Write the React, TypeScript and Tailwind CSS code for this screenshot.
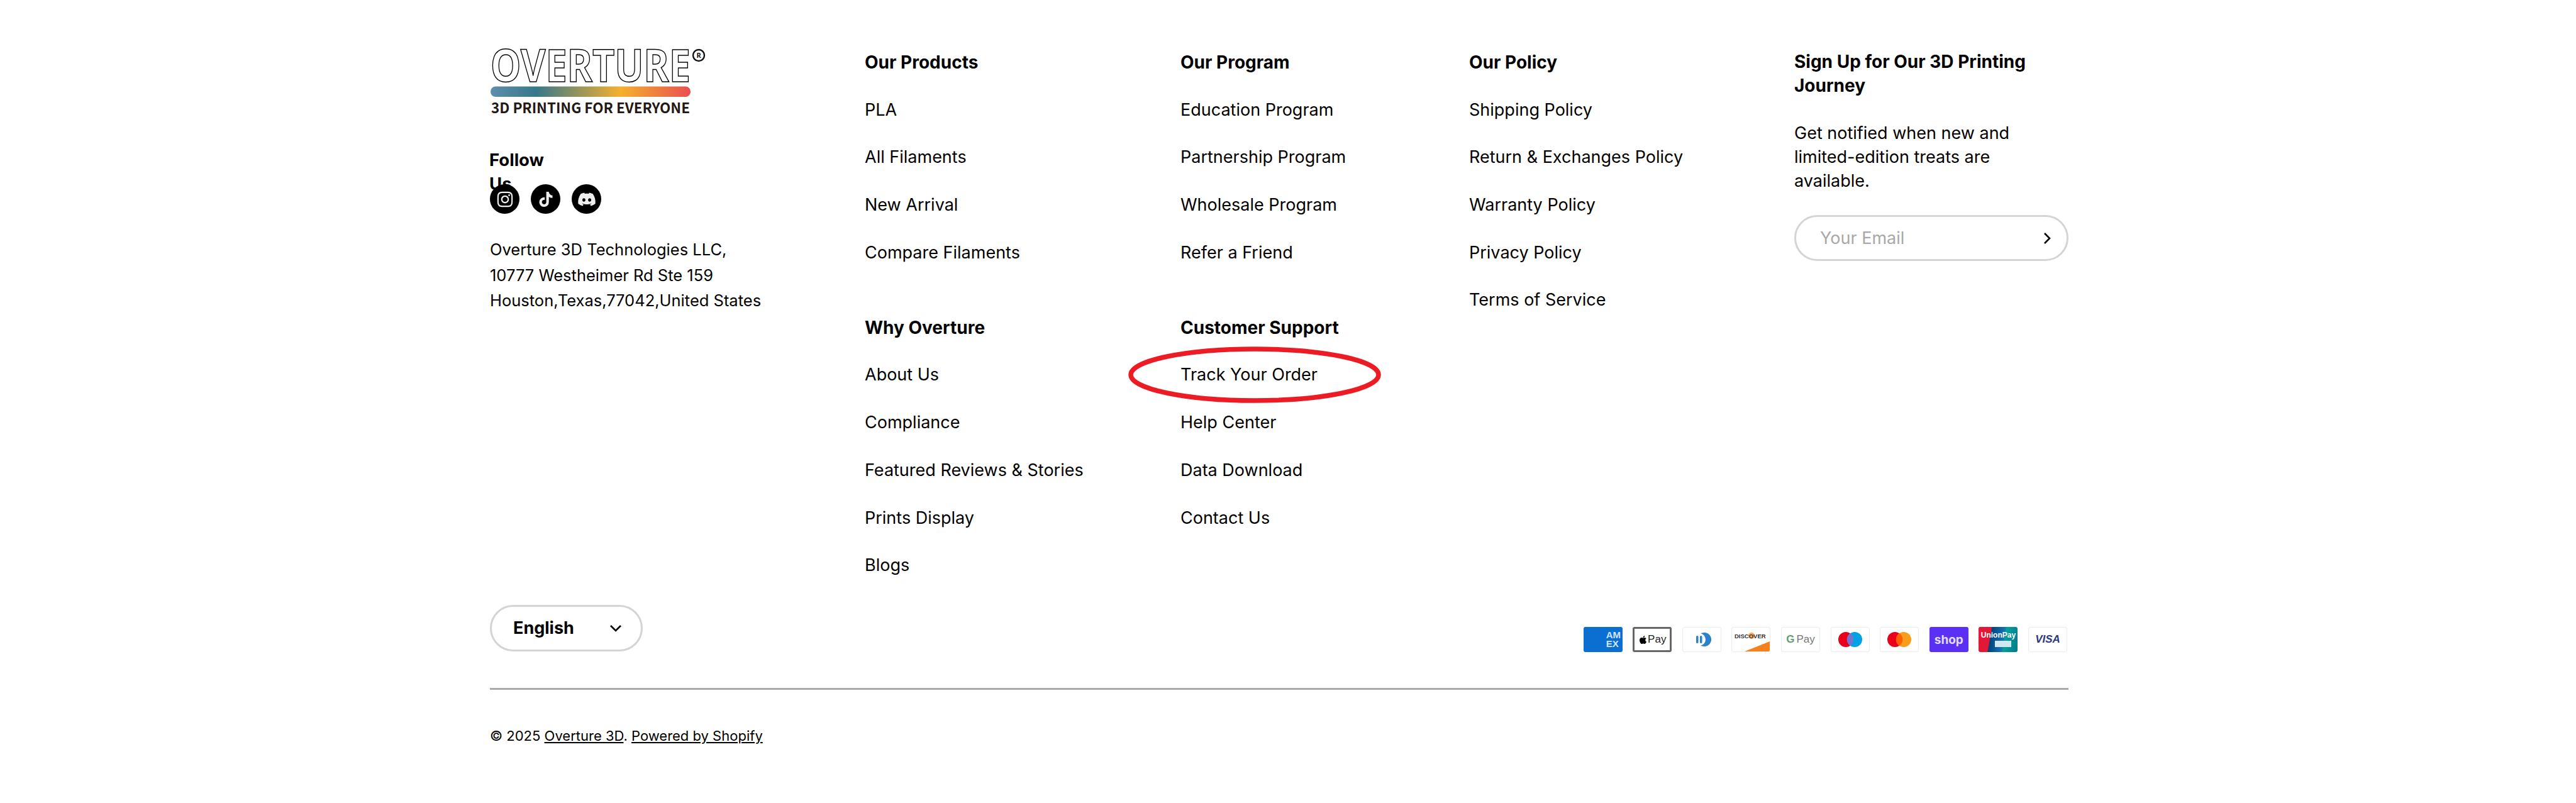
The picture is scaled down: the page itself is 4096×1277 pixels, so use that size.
import type { ReactNode } from "react";
import { FaApple, FaDiscord, FaInstagram, FaTiktok } from "react-icons/fa";

const sans = "font-['Inter','Liberation_Sans',sans-serif]";

function LinkList({ title, links }: { title: string; links: string[] }) {
  return (
    <div className="flex flex-col gap-[35.7px]">
      <h3 className="font-bold text-[28px]">{title}</h3>
      {links.map((l) =>
        l === "Track Your Order" ? (
          <div key={l} className="relative">
            {l}
            {/* red marker drawn over the page */}
            <svg className="absolute left-[-83px] top-[-25px]" width="402" height="90" viewBox="0 0 402 90">
              <ellipse cx="201" cy="45" rx="197" ry="41" fill="none" stroke="#ed1c24" strokeWidth="7.5" />
            </svg>
          </div>
        ) : (
          <div key={l}>{l}</div>
        )
      )}
    </div>
  );
}

function Logo() {
  return (
    <svg width="345" height="110" viewBox="0 0 345 110" className="block overflow-visible -mt-[1px]">
      <text
        x="1"
        y="52"
        fontFamily="'Noto Sans', sans-serif"
        fontWeight="700"
        fontSize="71"
        textLength="318"
        lengthAdjust="spacingAndGlyphs"
        fill="#fff"
        stroke="#000"
        strokeWidth="1.5"
      >
        OVERTURE
      </text>
      <circle cx="332" cy="10" r="9" fill="none" stroke="#111" strokeWidth="2.4" />
      <text x="332" y="14" textAnchor="middle" fontFamily="'Noto Sans', sans-serif" fontWeight="700" fontSize="11" fill="#111">
        R
      </text>
      <defs>
        <linearGradient id="logoBar" x1="0" x2="1" y1="0" y2="0">
          <stop offset="0" stopColor="#5f8ead" />
          <stop offset="0.23" stopColor="#37788a" />
          <stop offset="0.65" stopColor="#f5b02e" />
          <stop offset="1" stopColor="#e9504f" />
        </linearGradient>
      </defs>
      <rect x="1" y="59.5" width="318" height="16.5" rx="8" fill="url(#logoBar)" />
      <text
        x="2"
        y="102"
        fontFamily="'Noto Sans CJK JP', 'Noto Sans', sans-serif"
        fontWeight="700"
        fontSize="23"
        textLength="316"
        lengthAdjust="spacingAndGlyphs"
        fill="#231815"
      >
        3D PRINTING FOR EVERYONE
      </text>
    </svg>
  );
}

function Card({ className, children }: { className: string; children?: ReactNode }) {
  return <div className={`w-[62px] h-[40px] rounded-[3px] overflow-hidden shrink-0 ${className}`}>{children}</div>;
}

const cardText = "font-['Liberation_Sans',sans-serif]";

function PaymentIcons() {
  return (
    <div className="flex gap-[16.6px] items-center -mb-[1px]">
      <Card className="bg-[#0b6fd1] relative">
        <div className={`absolute left-[36px] top-[6px] text-[#cfe6ff] font-bold text-[15px] leading-[14px] whitespace-nowrap ${cardText}`}>
          AM
          <br />
          EX
        </div>
      </Card>
      <Card className="border-[3px] border-[#666] bg-white flex items-center justify-center">
        <FaApple className="text-[15px] text-black" />
        <span className={`text-[17px] text-[#222] ${cardText}`}>Pay</span>
      </Card>
      <Card className="border border-[#ececec] bg-white flex items-center justify-center">
        <svg width="34" height="24" viewBox="0 0 34 24">
          <circle cx="21" cy="12" r="11" fill="#2a82c9" />
          <circle cx="13" cy="12" r="10" fill="#fff" />
          <rect x="8" y="6" width="3.5" height="12" rx="1.7" fill="#2a82c9" />
          <rect x="14" y="6" width="3.5" height="12" rx="1.7" fill="#2a82c9" />
        </svg>
      </Card>
      <Card className="border border-[#ececec] bg-white">
        <svg width="60" height="38" viewBox="0 0 60 38">
          <circle cx="31" cy="13" r="5" fill="#f28a25" opacity="0.75" />
          <text x="4" y="17" fontFamily="'Liberation Sans', sans-serif" fontWeight="700" fontSize="9.5" fill="#333">
            DISCOVER
          </text>
          <path d="M20 38 L60 22 L60 38 Z" fill="#f48120" />
        </svg>
      </Card>
      <Card className="border border-[#ececec] bg-white flex items-center justify-center gap-[3px]">
        <span className={`text-[17px] font-bold text-[#5f9e6e] ${cardText}`}>G</span>
        <span className={`text-[17px] text-[#777] ${cardText}`}>Pay</span>
      </Card>
      <Card className="border border-[#ececec] bg-white flex items-center justify-center">
        <svg width="40" height="26" viewBox="0 0 40 26">
          <circle cx="13" cy="13" r="12" fill="#eb001b" />
          <circle cx="27" cy="13" r="12" fill="#00a2e5" />
          <path d="M20 3 A12 12 0 0 1 20 23 A12 12 0 0 1 20 3" fill="#7375cf" />
        </svg>
      </Card>
      <Card className="border border-[#ececec] bg-white flex items-center justify-center">
        <svg width="40" height="26" viewBox="0 0 40 26">
          <circle cx="13" cy="13" r="12" fill="#eb001b" />
          <circle cx="27" cy="13" r="12" fill="#f79e1b" />
          <path d="M20 3 A12 12 0 0 1 20 23 A12 12 0 0 1 20 3" fill="#ff5f00" />
        </svg>
      </Card>
      <Card className="bg-[#5a31f4] flex items-center justify-center">
        <span className={`text-[19px] font-bold text-[#e4dcff] leading-none ${sans}`}>shop</span>
      </Card>
      <Card className="relative bg-[linear-gradient(100deg,#e21836_0%,#e21836_30%,#00447c_32%,#1574b8_62%,#01a19a_66%,#01798a_100%)]">
        <div className={`absolute inset-x-0 top-[7px] text-center text-white font-bold text-[12px] leading-[13px] whitespace-nowrap ${cardText}`}>
          UnionPay
        </div>
        <div className="absolute left-[26px] top-[22px] w-[26px] h-[10px] bg-[#cfe7f0]" />
      </Card>
      <Card className="border border-[#ececec] bg-white flex items-center justify-center">
        <span className={`text-[17px] font-bold italic text-[#2b3a7a] ${cardText}`}>VISA</span>
      </Card>
    </div>
  );
}

export default function App() {
  return (
    <div className={`bg-white min-h-[1277px] pl-[779px] pt-[79px] text-black text-[27px] leading-[40px] ${sans}`}>
      <footer className="w-[2510px]">
        <div className="flex items-start">
          <div className="w-[596px]">
            <div className="h-[158px]">
              <Logo />
            </div>
            <h3 className="w-[100px] text-[27.5px] font-bold leading-[37.7px] -ml-[1px]">Follow Us</h3>
            <div className="flex gap-[18px] -mt-[18px]">
              <div className="w-[47px] h-[47px] rounded-full bg-black flex items-center justify-center text-[#eee]">
                <FaInstagram size={28} />
              </div>
              <div className="w-[47px] h-[47px] rounded-full bg-black flex items-center justify-center text-[#eee]">
                <FaTiktok size={24} />
              </div>
              <div className="w-[47px] h-[47px] rounded-full bg-black flex items-center justify-center text-[#eee]">
                <FaDiscord size={30} />
              </div>
            </div>
            <p className="mt-[37px] text-[25.5px] leading-[40.5px]">
              Overture 3D Technologies LLC,
              <br />
              10777 Westheimer Rd Ste 159
              <br />
              Houston,Texas,77042,United States
            </p>
          </div>

          <div className="w-[502px] flex flex-col gap-[79px]">
            <LinkList title="Our Products" links={["PLA", "All Filaments", "New Arrival", "Compare Filaments"]} />
            <LinkList title="Why Overture" links={["About Us", "Compliance", "Featured Reviews & Stories", "Prints Display", "Blogs"]} />
          </div>

          <div className="w-[459px] flex flex-col gap-[79px]">
            <LinkList title="Our Program" links={["Education Program", "Partnership Program", "Wholesale Program", "Refer a Friend"]} />
            <LinkList title="Customer Support" links={["Track Your Order", "Help Center", "Data Download", "Contact Us"]} />
          </div>

          <div className="w-[517px]">
            <LinkList
              title="Our Policy"
              links={["Shipping Policy", "Return & Exchanges Policy", "Warranty Policy", "Privacy Policy", "Terms of Service"]}
            />
          </div>

          <div className="w-[436px] leading-[38px]">
            <h3 className="font-bold text-[28px]">Sign Up for Our 3D Printing Journey</h3>
            <p className="mt-[38px]">Get notified when new and limited-edition treats are available.</p>
            <div className="mt-[35px] h-[73px] rounded-full border-[3px] border-[#d4d4d4] flex items-center justify-between pl-[38px] pr-[25px]">
              <span className="text-[#a8a8a8]">Your Email</span>
              <svg width="12" height="20" viewBox="0 0 12 20" fill="none" stroke="#000" strokeWidth="2.6">
                <path d="M2 2 L10 10 L2 18" />
              </svg>
            </div>
          </div>
        </div>

        <div className="flex items-end justify-between mt-[43px] pr-[2px]">
          <div className="w-[243px] h-[74px] rounded-full border-[3px] border-[#d4d4d4] flex items-center justify-between pl-[34px] pr-[30px]">
            <span className="text-[27px] font-bold">English</span>
            <svg width="20" height="12" viewBox="0 0 20 12" fill="none" stroke="#000" strokeWidth="2.6">
              <path d="M2 2 L10 10 L18 2" />
            </svg>
          </div>
          <PaymentIcons />
        </div>

        <div className="mt-[58px] h-[3px] bg-[#aaaaaa]" />

        <p className="mt-[55px] text-[22px] leading-[36px]">
          © 2025 <span className="underline">Overture 3D</span>. <span className="underline">Powered by Shopify</span>
        </p>
      </footer>
    </div>
  );
}
